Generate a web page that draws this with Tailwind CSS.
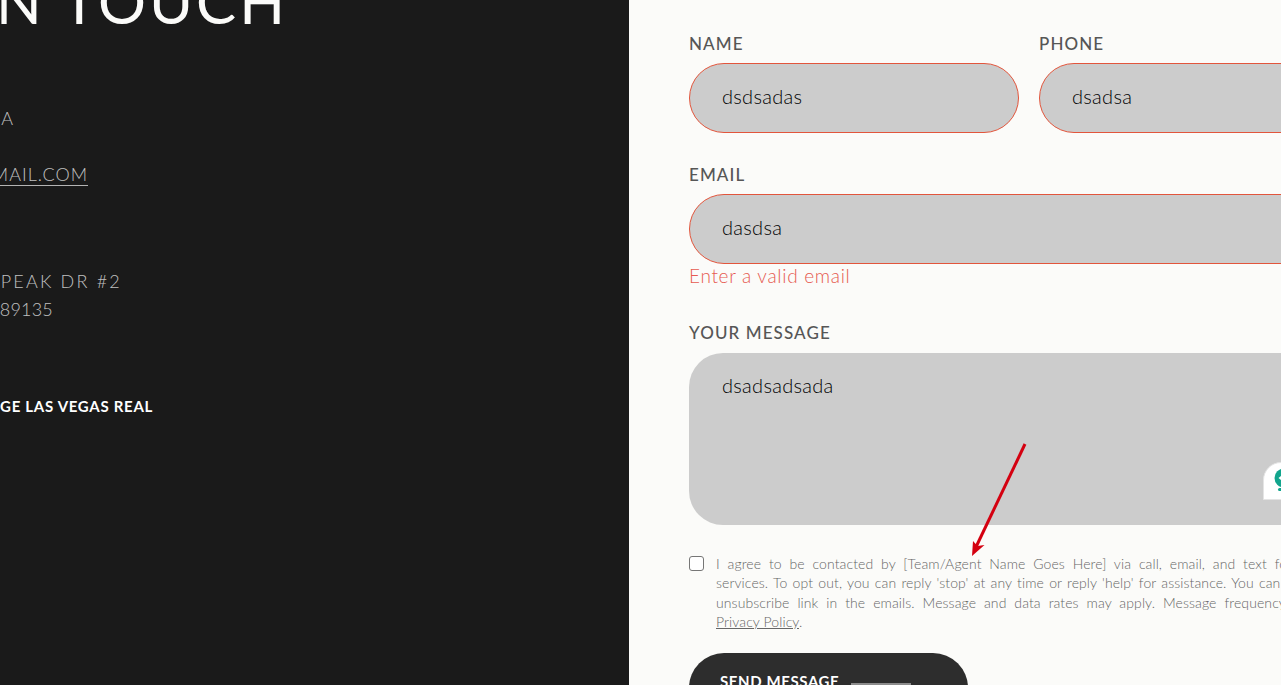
<!DOCTYPE html>
<html lang="en">
<head>
<meta charset="utf-8">
<title>Get in touch</title>
<script src="https://cdn.jsdelivr.net/npm/@tailwindcss/browser@4"></script>
</head>
<body class="m-0 overflow-hidden bg-[#fbfbf9] font-['Lato',sans-serif]">
<div class="relative flex h-[685px] w-[1281px] overflow-hidden">
  <aside class="flex h-full w-[629px] shrink-0 flex-col overflow-hidden bg-[#1a1a1a] text-[#c0c0c0]">
    <div class="-mt-[29px] flex h-[60px] w-[288px] items-end justify-end whitespace-nowrap text-[60px] leading-[60px] font-normal tracking-[3px] text-[#fbfbf9]">GET IN TOUCH</div>
    <div class="mt-[76px] flex h-[22px] w-[14px] items-center justify-end whitespace-nowrap text-[18px] font-light tracking-[1px]">NEVADA</div>
    <div class="mt-[34px] flex h-[23px] w-[88px] justify-end whitespace-nowrap border-b border-[#b4b4b4] text-[18px] leading-[22px] font-light tracking-[1px]">INFO@GMAIL.COM</div>
    <div class="mt-[81px] flex h-[28px] w-[122px] items-center justify-end whitespace-nowrap text-[18px] font-light tracking-[2.2px]">9525 PEAK DR #2</div>
    <div class="flex h-[28px] w-[53px] items-center justify-end whitespace-nowrap text-[18px] font-light tracking-[0.2px]">NV 89135</div>
    <div class="mt-[71px] flex h-[24px] w-[153px] items-center justify-end whitespace-nowrap text-[15px] font-bold tracking-[0.7px] text-white">BRIDGE LAS VEGAS REAL</div>
  </aside>

  <main class="flex min-w-0 flex-1 flex-col pl-[60px] text-[#565656]">
    <div class="mt-[34px] flex gap-[20px]">
      <div class="flex w-[330px] shrink-0 flex-col">
        <label class="h-[29px] text-[17px] leading-[20px] font-medium tracking-[1.1px]">NAME</label>
        <div class="flex h-[70px] items-center rounded-[35px] border border-[#e2553c] bg-[#cccccc] pb-[4px] pl-[32px] text-[20px] font-light tracking-[0.3px] text-black">dsdsadas</div>
      </div>
      <div class="flex w-[330px] shrink-0 flex-col">
        <label class="h-[29px] text-[17px] leading-[20px] font-medium tracking-[1.1px]">PHONE</label>
        <div class="flex h-[70px] items-center rounded-[35px] border border-[#e2553c] bg-[#cccccc] pb-[4px] pl-[32px] text-[20px] font-light tracking-[0.3px] text-black">dsadsa</div>
      </div>
    </div>

    <div class="mt-[32px] flex w-[680px] flex-col">
      <label class="h-[29px] text-[17px] leading-[20px] font-medium tracking-[1.1px]">EMAIL</label>
      <div class="flex h-[70px] items-center rounded-[35px] border border-[#e2553c] bg-[#cccccc] pb-[4px] pl-[32px] text-[20px] font-light tracking-[0.3px] text-black">dasdsa</div>
      <p class="h-[24px] text-[19px] leading-[24px] font-light tracking-[0.7px] text-[#e65a50]">Enter a valid email</p>
    </div>

    <div class="mt-[35px] flex w-[680px] flex-col">
      <label class="h-[30px] text-[17px] leading-[20px] font-medium tracking-[1.1px]">YOUR MESSAGE</label>
      <div class="relative h-[172px] rounded-[34px] bg-[#cccccc] pt-[20px] pl-[33px] text-[20px] leading-[24px] font-light tracking-[0.3px] text-black">dsadsadsada
        <div class="absolute top-[109px] left-[574px] h-[38px] w-[40px] overflow-hidden rounded-t-[18px] border border-[#e4e4e4] bg-white">
          <svg viewBox="0 0 40 38" class="h-[38px] w-[40px]"><circle cx="20" cy="15" r="9.5" fill="#12a58d"/><path d="M20 10.5 L14.5 15 L20 19.5 Z" fill="#fff"/><rect x="14" y="25" width="12" height="3" rx="1.5" fill="#12a58d"/></svg>
        </div>
      </div>
    </div>

    <div class="mt-[31px] flex w-[720px]">
      <span class="h-[15px] w-[15px] shrink-0 rounded-[3px] border border-[#767676] bg-white"></span>
      <div class="-mt-[2px] ml-[12px] whitespace-nowrap text-[14px] leading-[19.4px] font-light text-[#666666]">
        <p class="tracking-[0.1px] [word-spacing:3.9px]">I agree to be contacted by [Team/Agent Name Goes Here] via call, email, and text for real estate</p>
        <p class="tracking-[0.1px] [word-spacing:1.3px]">services. To opt out, you can reply 'stop' at any time or reply 'help' for assistance. You can also click the</p>
        <p class="tracking-[0.1px] [word-spacing:4px]">unsubscribe link in the emails. Message and data rates may apply. Message frequency varies.</p>
        <p class="tracking-[0.1px]"><span class="underline">Privacy Policy</span>.</p>
      </div>
    </div>

    <div class="mt-[21px] flex h-[70px] w-[279px] shrink-0 items-start rounded-[35px] bg-[#2d2d2d] pt-[19px] pl-[31px]">
      <span class="text-[15px] leading-[18px] font-bold tracking-[0.6px] text-white">SEND MESSAGE</span>
      <span class="mt-[11px] ml-[12px] h-[4px] w-[60px] bg-[#8c8c8c]"></span>
    </div>
  </main>

  <svg class="pointer-events-none absolute top-0 left-0 h-[685px] w-[1281px]" viewBox="0 0 1281 685">
    <path d="M1025 444 L976 547" stroke="#d40010" stroke-width="3" fill="none"/>
    <path d="M972 556 L973 541 L977.5 546 L984.5 545 Z" fill="#d40010"/>
  </svg>
</div>
</body>
</html>
